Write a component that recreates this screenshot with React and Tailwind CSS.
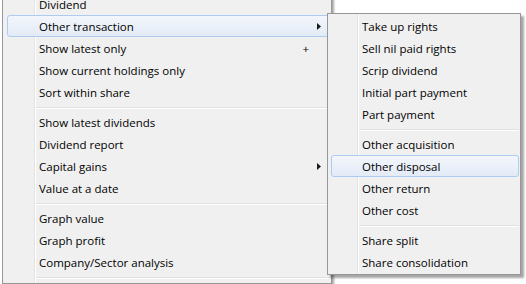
import React from 'react';

const mainItems = [
  { label: 'Dividend' },
  { label: 'Other transaction', sub: true, active: true },
  { label: 'Show latest only', key: '+' },
  { label: 'Show current holdings only' },
  { label: 'Sort within share' },
  { sep: true },
  { label: 'Show latest dividends' },
  { label: 'Dividend report' },
  { label: 'Capital gains', sub: true },
  { label: 'Value at a date' },
  { sep: true },
  { label: 'Graph value' },
  { label: 'Graph profit' },
  { label: 'Company/Sector analysis' },
  { sep: true },
];

const subItems = [
  { label: 'Take up rights' },
  { label: 'Sell nil paid rights' },
  { label: 'Scrip dividend' },
  { label: 'Initial part payment' },
  { label: 'Part payment' },
  { sep: true },
  { label: 'Other acquisition' },
  { label: 'Other disposal', active: true },
  { label: 'Other return' },
  { label: 'Other cost' },
  { sep: true },
  { label: 'Share split' },
  { label: 'Share consolidation' },
];

function Arrow() {
  return (
    <svg width="4" height="7" viewBox="0 0 4 7" className="block">
      <path d="M0 0 L4 3.5 L0 7 Z" fill="#1a1a1a" />
    </svg>
  );
}

function MenuItem({ item, textLeft, inset }) {
  return (
    <div className="relative h-[22px] flex items-center">
      {item.active && (
        <div
          className={`absolute top-0 bottom-0 rounded-[3px] border border-[#aecbf0] bg-gradient-to-b from-[#f3f6fb] to-[#e3ebf7] ${inset}`}
        />
      )}
      <span className={`relative ${textLeft} pt-[2px] text-[11.5px] leading-none text-black whitespace-nowrap`}>
        {item.label}
      </span>
      {item.key && (
        <span className="absolute right-[22px] pt-[2px] text-[11.5px] leading-none text-black">{item.key}</span>
      )}
      {item.sub && (
        <span className="absolute right-[10px]">
          <Arrow />
        </span>
      )}
    </div>
  );
}

function Separator({ left }) {
  return (
    <div className={`h-[8px] pt-[4px] ${left} pr-[2px]`}>
      <div className="border-t border-[#e0e0e0]" />
      <div className="border-t border-white" />
    </div>
  );
}

export default function App() {
  return (
    <div
      className="relative w-[526px] h-[284px] overflow-hidden bg-white"
      style={{ fontFamily: '"Open Sans", "Noto Sans", sans-serif' }}
    >
      {/* main context menu */}
      <div className="relative flex flex-col ml-[2px] mt-[-10px] w-[330px] border border-[#979797] bg-[#f0f0f0] py-[2px] shadow-[2px_2px_2px_rgba(0,0,0,0.35)]">
        <div className="absolute top-0 bottom-0 left-[31px] w-[2px] border-l border-[#e2e3e3] bg-white" />
        {mainItems.map((it, i) =>
          it.sep ? (
            <Separator key={i} left="pl-[33px]" />
          ) : (
            <MenuItem key={i} item={it} textLeft="ml-[36px]" inset="left-[4px] right-[1px]" />
          )
        )}
      </div>

      {/* sub menu */}
      <div className="absolute left-[327px] top-[13px] flex flex-col w-[194px] border border-[#979797] bg-[#f0f0f0] pt-[1px] pb-[1px] shadow-[3px_3px_2px_rgba(0,0,0,0.35)]">
        <div className="absolute top-0 bottom-0 left-[29px] w-[2px] border-l border-[#e2e3e3] bg-white" />
        {subItems.map((it, i) =>
          it.sep ? (
            <Separator key={i} left="pl-[31px]" />
          ) : (
            <MenuItem key={i} item={it} textLeft="ml-[34px]" inset="left-[3px] right-[1px]" />
          )
        )}
      </div>
    </div>
  );
}
